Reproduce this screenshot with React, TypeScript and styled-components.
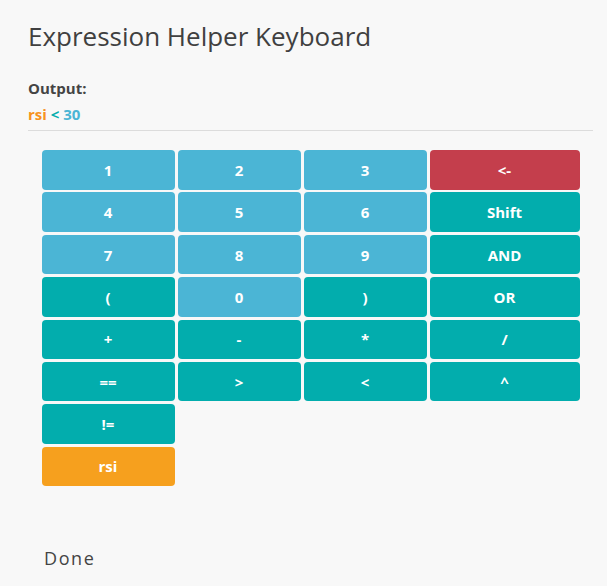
import styled, { createGlobalStyle } from "styled-components";

type TVariant = "number" | "operator" | "danger" | "variable";

type TKey = {
  label: string;
  variant: TVariant;
};

const keyColors: Record<TVariant, string> = {
  number: "#4bb5d5",
  operator: "#02adad",
  danger: "#c43e4c",
  variable: "#f6a01e",
};

const rows: TKey[][] = [
  [
    { label: "1", variant: "number" },
    { label: "2", variant: "number" },
    { label: "3", variant: "number" },
    { label: "<-", variant: "danger" },
  ],
  [
    { label: "4", variant: "number" },
    { label: "5", variant: "number" },
    { label: "6", variant: "number" },
    { label: "Shift", variant: "operator" },
  ],
  [
    { label: "7", variant: "number" },
    { label: "8", variant: "number" },
    { label: "9", variant: "number" },
    { label: "AND", variant: "operator" },
  ],
  [
    { label: "(", variant: "operator" },
    { label: "0", variant: "number" },
    { label: ")", variant: "operator" },
    { label: "OR", variant: "operator" },
  ],
  [
    { label: "+", variant: "operator" },
    { label: "-", variant: "operator" },
    { label: "*", variant: "operator" },
    { label: "/", variant: "operator" },
  ],
  [
    { label: "==", variant: "operator" },
    { label: ">", variant: "operator" },
    { label: "<", variant: "operator" },
    { label: "^", variant: "operator" },
  ],
  [{ label: "!=", variant: "operator" }],
  [{ label: "rsi", variant: "variable" }],
];

const GlobalStyle = createGlobalStyle`
  body {
    margin: 0;
    background-color: #f8f8f8;
    font-family: "Open Sans", "DejaVu Sans", sans-serif;
  }
`;

const Page = styled.div`
  padding: 18px 14px 20px 28px;
  color: #444444;
`;

const Title = styled.h1`
  margin: 0;
  font-size: 26px;
  font-weight: 400;
  line-height: normal;
  color: #404040;
`;

const OutputLabel = styled.div`
  margin-top: 24px;
  font-size: 15px;
  font-weight: 700;
  line-height: normal;
  color: #444444;
`;

const Expression = styled.div`
  margin-top: 6px;
  font-size: 15px;
  font-weight: 700;
  line-height: normal;
`;

const Token = styled.span<{ $color: string }>`
  color: ${(p) => p.$color};
`;

const Divider = styled.hr`
  margin: 6px 0 0;
  border: none;
  border-top: 1px solid #dcdcdc;
`;

const Keyboard = styled.div`
  margin: 19px 14px 0;
  display: grid;
  grid-template-columns: 133px 123px 123px 150px;
  grid-auto-rows: 39.5px;
  column-gap: 3px;
  row-gap: 2.9px;
  justify-content: center;
`;

const Key = styled.button<{ $variant: TVariant; $rowStart: boolean }>`
  grid-column-start: ${(p) => (p.$rowStart ? 1 : "auto")};
  border: none;
  border-radius: 4px;
  background-color: ${(p) => keyColors[p.$variant]};
  color: #ffffff;
  font-family: "Open Sans", "DejaVu Sans", sans-serif;
  font-size: 15px;
  font-weight: 700;
  cursor: pointer;
  padding: 0;
`;

const Footer = styled.div`
  margin-top: 60px;
  padding-left: 16px;
`;

const DoneButton = styled.button`
  border: none;
  background: none;
  padding: 0;
  font-family: "Open Sans", "DejaVu Sans", sans-serif;
  font-size: 18px;
  line-height: normal;
  letter-spacing: 1.6px;
  color: #444444;
  cursor: pointer;
`;

const App = () => {
  return (
    <Page>
      <GlobalStyle />
      <Title>Expression Helper Keyboard</Title>
      <OutputLabel>Output:</OutputLabel>
      <Expression>
        <Token $color="#f7931e">rsi</Token>{" "}
        <Token $color="#02adad">&lt;</Token>{" "}
        <Token $color="#4bb5d5">30</Token>
      </Expression>
      <Divider />
      <Keyboard>
        {rows.map((row, r) =>
          row.map((k, i) => (
            <Key key={`${r}-${i}`} $variant={k.variant} $rowStart={i === 0}>
              {k.label}
            </Key>
          ))
        )}
      </Keyboard>
      <Footer>
        <DoneButton>Done</DoneButton>
      </Footer>
    </Page>
  );
};

export default App;
